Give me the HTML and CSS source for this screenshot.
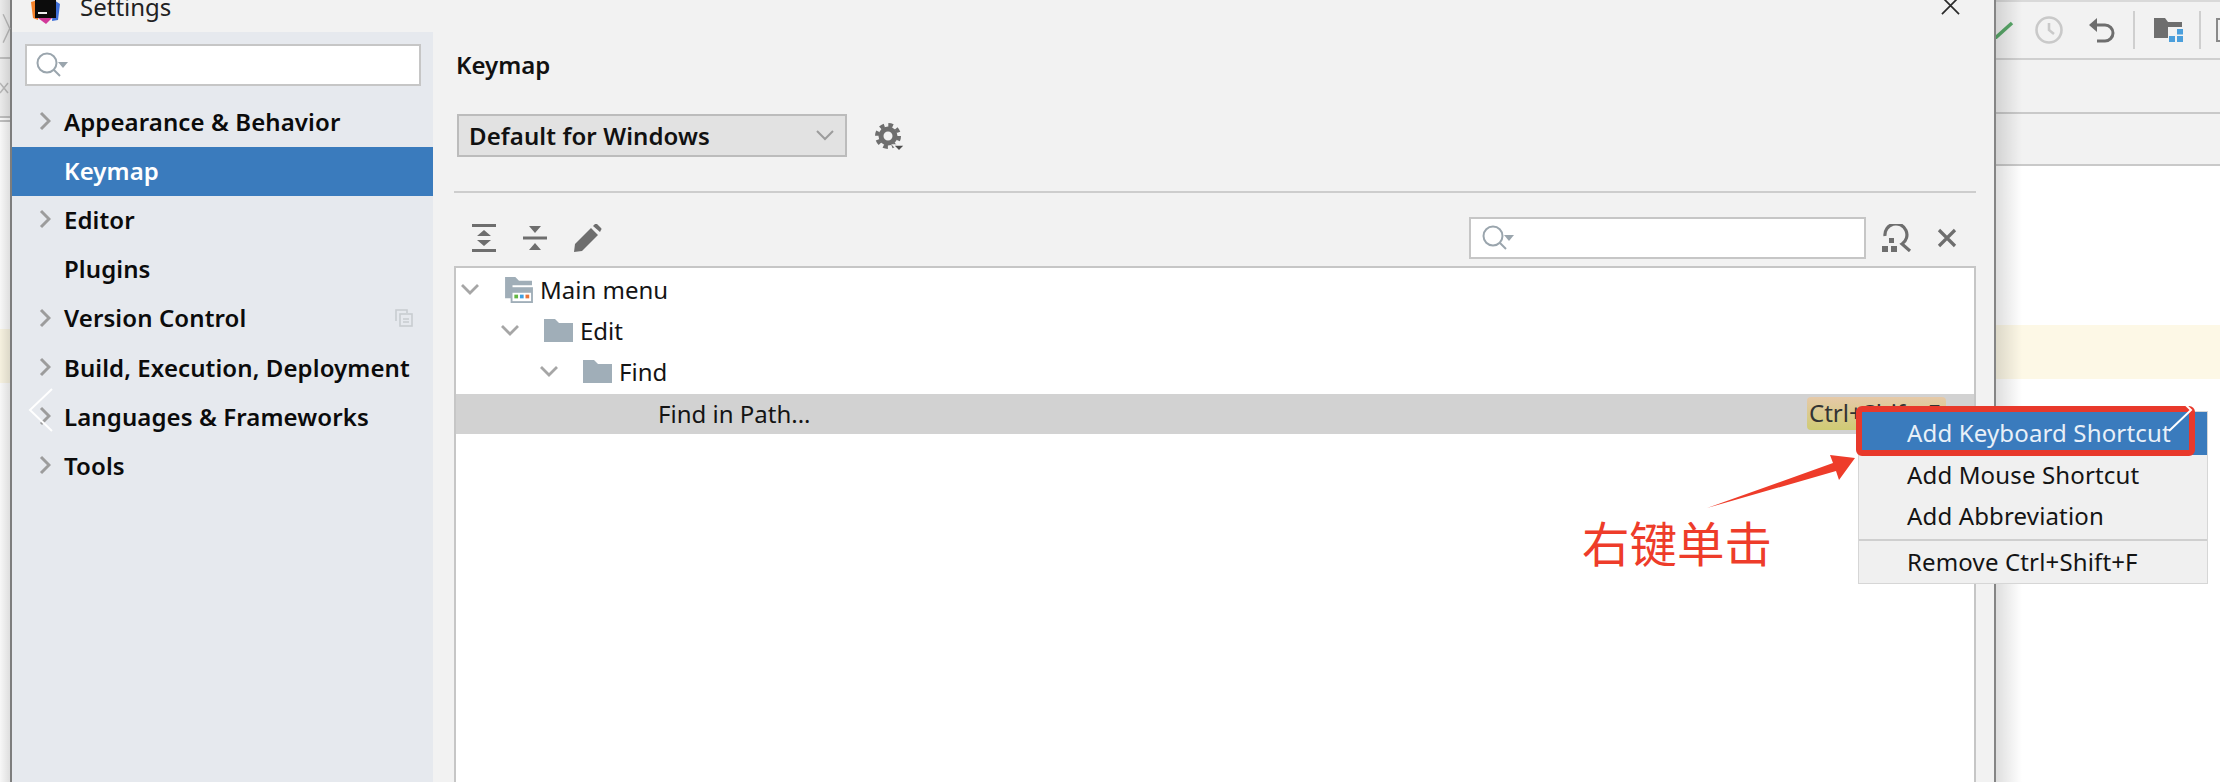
FILE: index.html
```html
<!DOCTYPE html>
<html lang="en">

<head>
    <meta charset="UTF-8">
    <meta name="viewport" content="width=device-width, initial-scale=1.0">
    <title>Settings</title>
    <link rel="stylesheet" href="styles.css">
</head>

<body>
    <div class="screen">
        <!-- IDE peeking out on the left -->
        <div class="ide-left">
            <div class="strip-bar strip-top">
                <svg class="strip-mark" viewBox="0 0 11 58"><path d="M3 15 L10 30 L3 45" /></svg>
            </div>
            <div class="strip-bar strip-tabs">
                <svg class="strip-mark" viewBox="0 0 11 55"><path d="M0 24 L8 34 M8 24 L0 34" /></svg>
            </div>
            <div class="strip-code">
                <div class="caret-line"></div>
            </div>
        </div>

        <div class="dialog">
            <div class="titlebar">
                <svg class="app-logo" viewBox="0 0 30 24">
                    <path d="M1 2 L8 0 L8 20 L3 18 Z" fill="#f5822a" />
                    <path d="M24 0 L30 4 L28 20 L22 21 Z" fill="#3f6fd8" />
                    <path d="M8 18 L22 18 L16 24 Z" fill="#d2399a" />
                    <rect x="5" y="-6" width="21" height="24" fill="#0c0c0c" />
                    <rect x="8" y="12" width="9" height="2" fill="#eee" />
                </svg>
                <span class="title-text">Settings</span>
                <svg class="close-x" viewBox="0 0 20 20"><path d="M1 1 L19 19 M19 1 L1 19" /></svg>
            </div>

            <div class="dialog-body">
                <div class="sidebar">
                    <div class="search-box side-search">
                        <svg class="search-icon" viewBox="0 0 34 28">
                            <circle cx="12" cy="12" r="9.5" />
                            <path d="M19 19 L25 25" />
                            <path class="fill" d="M23 11 L33 11 L28 17 Z" />
                        </svg>
                    </div>
                    <div class="nav-row"><svg class="nav-arrow" viewBox="0 0 12 20"><path d="M2 2 L10 10 L2 18" /></svg>Appearance &amp; Behavior</div>
                    <div class="nav-row selected"><span class="nav-gap"></span>Keymap</div>
                    <div class="nav-row"><svg class="nav-arrow" viewBox="0 0 12 20"><path d="M2 2 L10 10 L2 18" /></svg>Editor</div>
                    <div class="nav-row"><span class="nav-gap"></span>Plugins</div>
                    <div class="nav-row"><svg class="nav-arrow" viewBox="0 0 12 20"><path d="M2 2 L10 10 L2 18" /></svg>Version Control
                        <svg class="project-icon" viewBox="0 0 18 18">
                            <path d="M1 12 L1 1 L12 1 L12 4" />
                            <rect x="5" y="5" width="12" height="12" />
                            <path d="M8 10 L14 10 M8 13 L14 13" />
                        </svg>
                    </div>
                    <div class="nav-row"><svg class="nav-arrow" viewBox="0 0 12 20"><path d="M2 2 L10 10 L2 18" /></svg>Build, Execution, Deployment</div>
                    <div class="nav-row"><svg class="nav-arrow" viewBox="0 0 12 20"><path d="M2 2 L10 10 L2 18" /></svg>Languages &amp; Frameworks</div>
                    <div class="nav-row"><svg class="nav-arrow" viewBox="0 0 12 20"><path d="M2 2 L10 10 L2 18" /></svg>Tools</div>
                </div>

                <div class="content">
                    <div class="page-title">Keymap</div>

                    <div class="scheme-row">
                        <div class="combo">
                            <span>Default for Windows</span>
                            <svg class="combo-arrow" viewBox="0 0 18 11"><path d="M1 1 L9 9 L17 1" /></svg>
                        </div>
                        <svg class="gear" viewBox="0 0 30 28">
                            <circle class="gear-teeth" cx="13" cy="13" r="11" />
                            <circle class="gear-ring" cx="13" cy="13" r="7" />
                            <path class="gear-drop" d="M18 22 L30 22 L24 28 Z" />
                        </svg>
                    </div>

                    <div class="divider"></div>

                    <div class="toolbar">
                        <svg class="tool" viewBox="0 0 24 28">
                            <path d="M0 0 H24 V3 H0 Z M0 25 H24 V28 H0 Z M12 6 L19 12 H5 Z M5 16 H19 L12 22 Z" />
                        </svg>
                        <svg class="tool" viewBox="0 0 24 28">
                            <path d="M0 12.5 H24 V15.5 H0 Z M6 2 H18 L12 9 Z M12 19 L18 26 H6 Z" />
                        </svg>
                        <svg class="tool" viewBox="0 0 28 28">
                            <path d="M0 28 L1 20 L17 4 L24 11 L8 27 Z M19 2 L21 0 Q22 -1 23 0 L27 4 Q28 5 27 6 L26 8 Z" />
                        </svg>
                        <div class="toolbar-right">
                            <div class="search-box tree-search">
                                <svg class="search-icon" viewBox="0 0 34 28">
                                    <circle cx="12" cy="12" r="9.5" />
                                    <path d="M19 19 L25 25" />
                                    <path class="fill" d="M23 11 L33 11 L28 17 Z" />
                                </svg>
                            </div>
                            <svg class="tool refind" viewBox="0 0 30 28">
                                <path class="line" d="M3 12 A11 11 0 1 1 20 20 L28 27" />
                                <path d="M7 14 H12 V19 H7 Z M0 22 H6 V28 H0 Z M9 22 H15 V28 H9 Z" />
                            </svg>
                            <svg class="tool clear" viewBox="0 0 20 20"><path class="line" d="M2 2 L18 18 M18 2 L2 18" /></svg>
                        </div>
                    </div>

                    <div class="tree">
                        <div class="tree-row level-0">
                            <svg class="tree-arrow" viewBox="0 0 18 11"><path d="M1 1 L9 9 L17 1" /></svg>
                            <svg class="folder" viewBox="0 0 30 28">
                                <path d="M0 0 H11 L15 4 H29 V9 H8 V23 H0 Z" fill="#a0aeb8" />
                                <rect x="6" y="11" width="24" height="17" fill="#a0aeb8" />
                                <rect x="8" y="17" width="20" height="9" fill="#fff" />
                                <rect x="10" y="19" width="4" height="4" fill="#62b543" />
                                <rect x="16" y="19" width="4" height="4" fill="#40a0e0" />
                                <rect x="22" y="19" width="4" height="4" fill="#e8743b" />
                            </svg>
                            <span>Main menu</span>
                        </div>
                        <div class="tree-row level-1">
                            <svg class="tree-arrow" viewBox="0 0 18 11"><path d="M1 1 L9 9 L17 1" /></svg>
                            <svg class="folder" viewBox="0 0 30 24"><path d="M0 0 H11 L15 4 H29 V23 H0 Z" fill="#a0aeb8" /></svg>
                            <span>Edit</span>
                        </div>
                        <div class="tree-row level-2">
                            <svg class="tree-arrow" viewBox="0 0 18 11"><path d="M1 1 L9 9 L17 1" /></svg>
                            <svg class="folder" viewBox="0 0 30 24"><path d="M0 0 H11 L15 4 H29 V23 H0 Z" fill="#a0aeb8" /></svg>
                            <span>Find</span>
                        </div>
                        <div class="tree-row level-3 current">
                            <span class="leaf-gap"></span>
                            <span>Find in Path...</span>
                            <span class="shortcut">Ctrl+Shift+F</span>
                        </div>
                    </div>
                </div>
            </div>
        </div>

        <!-- IDE behind the dialog -->
        <div class="ide-right">
            <div class="ide-toolbar">
                <svg class="check-part" viewBox="0 0 18 18"><path d="M-4 20 L16 2" /></svg>
                <svg class="clock" viewBox="0 0 28 28">
                    <circle cx="14" cy="14" r="12.5" />
                    <path d="M14 7 L14 14 L19 18" />
                </svg>
                <svg class="undo" viewBox="0 0 26 26">
                    <path class="undo-line" d="M5 8 H16 A7.5 7.5 0 0 1 16 24 H8" />
                    <path class="undo-head" d="M0 8 L8 1 V15 Z" />
                </svg>
                <span class="ide-sep"></span>
                <svg class="project" viewBox="0 0 30 24">
                    <path d="M0 0 H11 L14 4 H28 V9 H14 V20 H0 Z" fill="#6e6e6e" />
                    <rect x="23" y="11" width="6" height="5.5" fill="#4b9fdc" />
                    <rect x="15" y="18" width="6" height="6" fill="#4b9fdc" />
                    <rect x="23" y="18" width="6" height="6" fill="#4b9fdc" />
                </svg>
                <span class="ide-sep"></span>
                <span class="cut-icon"></span>
            </div>
            <div class="ide-bar bar-a"></div>
            <div class="ide-bar bar-b"></div>
            <div class="editor">
                <div class="caret-line"></div>
            </div>
        </div>

        <!-- context menu -->
        <div class="popup">
            <div class="popup-item active">Add Keyboard Shortcut</div>
            <div class="popup-item">Add Mouse Shortcut</div>
            <div class="popup-item">Add Abbreviation</div>
            <div class="popup-sep"></div>
            <div class="popup-item">Remove Ctrl+Shift+F</div>
        </div>

        <!-- annotation drawn on the screenshot -->
        <div class="mark-box"></div>
        <svg class="overlay" viewBox="0 0 2220 782">
            <polygon class="mark-arrow" points="1707,508 1833,463 1830,455 1855,458 1839,480 1836,471" />
            <path class="nav-chevron" d="M52 389 L30 410 L52 431" />
            <path class="nav-chevron" d="M2169 389 L2191 410 L2169 431" />
        </svg>
        <div class="mark-text">右键单击</div>
    </div>
</body>

</html>
```

FILE: styles.css
```css
* {
    margin: 0;
    padding: 0;
    box-sizing: border-box;
}

body {
    background: #fff;
    font-family: "Noto Sans", "Open Sans", sans-serif;
    color: #111;
    overflow: hidden;
}

svg {
    display: block;
    flex: none;
}

.screen {
    position: relative;
    width: 2220px;
    height: 782px;
    display: flex;
    overflow: hidden;
}

/* left strip of the IDE */
.ide-left {
    position: relative;
    width: 10px;
    flex: none;
    background: #fff;
}

.ide-left::after {
    content: "";
    position: absolute;
    inset: 0;
    background: linear-gradient(to right, rgba(0, 0, 0, 0.03), rgba(0, 0, 0, 0.13));
}

.strip-bar {
    background: #f2f2f2;
    border-bottom: 2px solid #c4c4c4;
}

.strip-top {
    height: 59px;
}

.strip-tabs {
    height: 59px;
}

.strip-mark {
    width: 11px;
    height: 55px;
}

.strip-mark path {
    fill: none;
    stroke: #bdbdbd;
    stroke-width: 1.5;
}

.strip-code {
    padding-top: 207px;
    border-top: 2px solid #c4c4c4;
    margin-top: 2px;
}

.caret-line {
    height: 54px;
    background: #fdf8e6;
}

/* dialog */
.dialog {
    width: 1986px;
    flex: none;
    display: flex;
    flex-direction: column;
    background: #f2f2f2;
    border-left: 2px solid #7d7d7d;
    border-right: 2px solid #858585;
}

.titlebar {
    height: 32px;
    flex: none;
    display: flex;
    align-items: flex-end;
    padding-left: 18px;
    padding-bottom: 12px;
}

.app-logo {
    width: 30px;
    height: 24px;
    margin-bottom: -4px;
}

.title-text {
    margin-left: 20px;
    font-size: 24px;
    line-height: 30px;
    margin-bottom: -2px;
    color: #222;
}

.close-x {
    width: 19px;
    height: 19px;
    margin-left: auto;
    margin-right: 34px;
    margin-bottom: 5px;
}

.close-x path {
    stroke: #2b2b2b;
    stroke-width: 1.8;
    fill: none;
}

.dialog-body {
    flex: 1;
    display: flex;
    min-height: 0;
}

/* sidebar */
.sidebar {
    width: 421px;
    flex: none;
    background: #e6e9ee;
    padding-top: 12px;
}

.search-box {
    background: #fff;
    border: 2px solid #c6c6c6;
    display: flex;
    align-items: center;
    padding-left: 10px;
}

.side-search {
    width: 396px;
    height: 42px;
    margin: 0 0 12px 13px;
    padding-left: 8px;
}

.search-icon {
    width: 34px;
    height: 28px;
}

.search-icon circle,
.search-icon path {
    fill: none;
    stroke: #9aa5ad;
    stroke-width: 2;
}

.search-icon path.fill {
    fill: #9aa5ad;
    stroke: none;
}

.nav-row {
    height: 49.2px;
    display: flex;
    align-items: center;
    padding-left: 27px;
    padding-bottom: 3px;
    font-size: 24px;
    letter-spacing: 0.1px;
    font-weight: 600;
    color: #0b0b0b;
    white-space: nowrap;
}

.nav-row.selected {
    background: #3a7bbd;
    color: #fff;
}

.nav-arrow {
    width: 12px;
    height: 20px;
    margin-right: 13px;
}

.nav-arrow path {
    fill: none;
    stroke: #9c9c9c;
    stroke-width: 3;
}

.nav-gap {
    width: 25px;
}

.project-icon {
    width: 18px;
    height: 18px;
    margin-left: auto;
    margin-right: 20px;
}

.project-icon path,
.project-icon rect {
    fill: none;
    stroke: #c8ccd0;
    stroke-width: 1.6;
}

/* keymap page */
.content {
    flex: 1;
    min-width: 0;
    padding: 0 18px 0 21px;
    display: flex;
    flex-direction: column;
}

.page-title {
    height: 32px;
    margin: 17px 0 33px 2px;
    font-size: 24px;
    line-height: 32px;
    font-weight: 600;
}

.scheme-row {
    display: flex;
    align-items: center;
    padding-left: 3px;
}

.combo {
    width: 390px;
    height: 43px;
    background: #e2e2e2;
    border: 2px solid #bcbcbc;
    display: flex;
    align-items: center;
    justify-content: space-between;
    padding: 0 11px 0 10px;
    font-size: 24px;
    letter-spacing: 0.1px;
    font-weight: 600;
}

.combo-arrow {
    width: 18px;
    height: 11px;
}

.combo-arrow path {
    fill: none;
    stroke: #9c9c9c;
    stroke-width: 2;
}

.tree-arrow path {
    fill: none;
    stroke: #a6a6a6;
    stroke-width: 2.8;
}

.gear {
    width: 30px;
    height: 28px;
    margin: 3px 0 0 28px;
}

.gear-teeth {
    fill: none;
    stroke: #6e6e6e;
    stroke-width: 4;
    stroke-dasharray: 4.6 4.04;
}

.gear-ring {
    fill: none;
    stroke: #6e6e6e;
    stroke-width: 5;
}

.gear-drop {
    fill: #4d4d4d;
    stroke: #f2f2f2;
    stroke-width: 1.5;
}

.divider {
    height: 2px;
    background: #cdcdcd;
    margin-top: 34px;
}

.toolbar {
    height: 42px;
    margin-top: 24px;
    display: flex;
    align-items: center;
    padding-left: 18px;
    gap: 27px;
}

.tool {
    width: 24px;
    height: 28px;
    fill: #6e6e6e;
}

.tool:nth-child(3) {
    width: 28px;
}

.toolbar-right {
    margin-left: auto;
    display: flex;
    align-items: center;
}

.tree-search {
    width: 397px;
    height: 42px;
}

.refind {
    width: 30px;
    height: 28px;
    margin-left: 16px;
}

.clear {
    width: 20px;
    height: 20px;
    margin: 0 15px 0 21px;
}

.tool .line {
    fill: none;
    stroke: #6e6e6e;
    stroke-width: 3.2;
}

.tree {
    flex: 1;
    margin-top: 7px;
    background: #fff;
    border: 2px solid #c6c6c6;
    border-bottom: none;
    padding-top: 2px;
}

.tree-row {
    height: 41px;
    display: flex;
    align-items: center;
    padding-bottom: 2px;
    font-size: 24px;
    color: #141414;
}

.level-0 {
    padding-left: 5px;
}

.level-1 {
    padding-left: 45px;
}

.level-2 {
    padding-left: 84px;
}

.level-3 {
    padding-left: 123px;
}

.tree-arrow {
    width: 18px;
    height: 11px;
    margin-right: 25px;
}

.folder {
    width: 30px;
    height: 26px;
    margin-right: 6px;
}

.leaf-gap {
    width: 79px;
}

.current {
    background: #d2d2d2;
    height: 40px;
    margin-top: 1px;
    padding-bottom: 1px;
}

.shortcut {
    margin-left: auto;
    margin-right: 28px;
    width: 139px;
    height: 33px;
    line-height: 32px;
    padding-left: 2px;
    border-radius: 4px;
    background: linear-gradient(#e6c9a8, #cfcb74);
    color: #333;
    white-space: nowrap;
    overflow: hidden;
}

/* right part of the IDE */
.ide-right {
    position: relative;
    flex: 1;
    min-width: 0;
    background: #fff;
}

.ide-right::after {
    content: "";
    position: absolute;
    top: 0;
    bottom: 0;
    left: 0;
    width: 26px;
    background: linear-gradient(to right, rgba(0, 0, 0, 0.13), rgba(0, 0, 0, 0));
}

.ide-toolbar {
    height: 60px;
    background: #f2f2f2;
    border-top: 2px solid #d9d9d9;
    border-bottom: 2px solid #cfcfcf;
    display: flex;
    align-items: center;
}

.check-part {
    width: 18px;
    height: 18px;
}

.check-part path {
    stroke: #59a869;
    stroke-width: 3.5;
    fill: none;
}

.clock {
    width: 28px;
    height: 28px;
    margin-left: 21px;
}

.clock circle,
.clock path {
    fill: none;
    stroke: #c9c9c9;
    stroke-width: 2.6;
}

.undo {
    width: 26px;
    height: 26px;
    margin-left: 26px;
}

.undo-line {
    fill: none;
    stroke: #6e6e6e;
    stroke-width: 3;
}

.undo-head {
    fill: #6e6e6e;
}

.ide-sep {
    width: 2px;
    height: 38px;
    background: #cfcfcf;
    flex: none;
}

.undo + .ide-sep {
    margin-left: 18px;
}

.project {
    width: 30px;
    height: 24px;
    margin: 0 15px 0 19px;
}

.cut-icon {
    width: 10px;
    height: 24px;
    margin-left: 15px;
    border: 2px solid #8a8a8a;
    flex: none;
}

.ide-bar {
    background: #f2f2f2;
    border-bottom: 2px solid #c9c9c9;
}

.bar-a {
    height: 54px;
}

.bar-b {
    height: 52px;
}

.editor {
    padding-top: 159px;
}

/* context menu */
.popup {
    position: absolute;
    left: 1858px;
    top: 411px;
    width: 350px;
    height: 173px;
    background: #f0f0f0;
    border: 1px solid #d6d6d6;
    font-size: 24px;
    letter-spacing: 0.15px;
    color: #141414;
}

.popup-item {
    height: 41px;
    line-height: 40px;
    padding-left: 48px;
    white-space: nowrap;
}

.popup-item.active {
    height: 43px;
    line-height: 42px;
    background: #3a7bbd;
    color: #e8f0f8;
}

.popup-sep {
    height: 2px;
    background: #cfcfcf;
    margin: 2px 0 1px;
}

/* annotation */
.mark-box {
    position: absolute;
    left: 1856px;
    top: 406px;
    width: 339px;
    height: 50px;
    border: 6px solid #e8392b;
    border-radius: 6px;
}

.overlay {
    position: absolute;
    left: 0;
    top: 0;
    width: 2220px;
    height: 782px;
}

.mark-arrow {
    fill: #ee3c2a;
}

.nav-chevron {
    fill: none;
    stroke: #fff;
    stroke-width: 2;
}

.mark-text {
    position: absolute;
    left: 1582px;
    top: 510px;
    font-family: "Noto Sans CJK SC", sans-serif;
    font-size: 47.5px;
    line-height: 64px;
    color: #ee3c2a;
    white-space: nowrap;
}
```
